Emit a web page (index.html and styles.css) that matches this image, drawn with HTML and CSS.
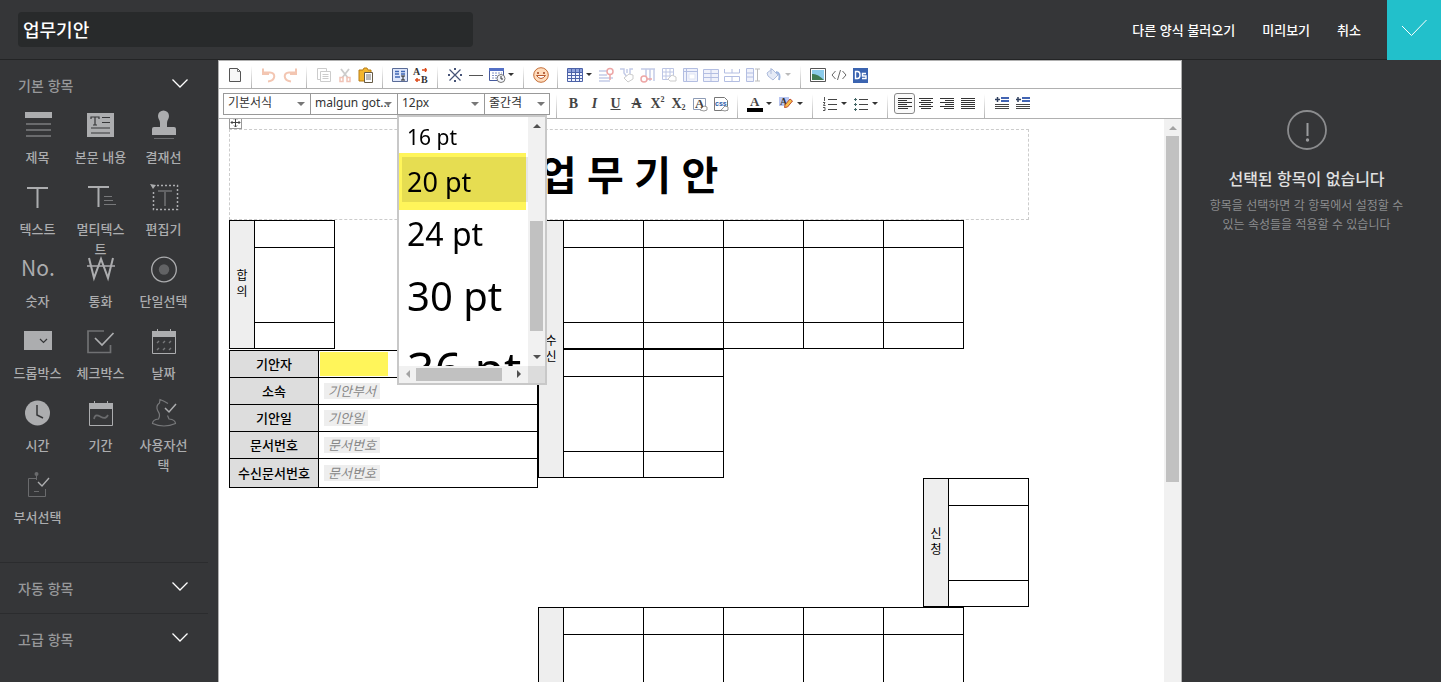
FILE: index.html
```html
<!DOCTYPE html>
<html lang="ko">
<head>
<meta charset="utf-8">
<title>업무기안</title>
<link rel="stylesheet" href="styles.css">
</head>
<body>
<header class="topbar">
  <input class="form-name" type="text" value="업무기안" aria-label="양식 이름">
  <nav class="top-actions">
    <button type="button">다른 양식 불러오기</button>
    <button type="button">미리보기</button>
    <button type="button">취소</button>
  </nav>
  <button type="button" class="confirm" aria-label="저장">
    <svg width="26" height="18" viewBox="0 0 26 18"><path d="M1 7l9.500 9.500L25.500 1" fill="none" stroke="#fff" stroke-width="1"/></svg>
  </button>
</header>

<div class="workspace">
  <aside class="palette">
    <section class="section open">
      <button type="button" class="section-head"><span>기본 항목</span><svg width="16" height="9" viewBox="0 0 16 9"><path d="M.5 .5L8 8 15.500 .5"/></svg></button>
      <div class="items">
        <button type="button" class="item"><svg viewBox="0 0 30 30"><path d="M2 2h27v6H2z" fill="#acadaf"/><path d="M3 14h25M3 20h25M3 26h25" stroke="#6a6b6d" stroke-width="2"/></svg><span>제목</span></button>
        <button type="button" class="item"><svg viewBox="0 0 30 30"><path d="M1 3h27v24H1z" fill="#acadaf"/><path d="M5 9V7h8v2M9 7v8M7 15h4M16 7.500h8M16 12.500h8M5 18h19M5 23h19" fill="none" stroke="#353638" stroke-width="1.200"/></svg><span>본문 내용</span></button>
        <button type="button" class="item"><svg viewBox="0 0 30 30"><path d="M9 6a5.500 5.500 0 0 1 11 0c0 3-2 4-2 7v4h7q2 0 2 2v6H3v-6q0-2 2-2h6v-4c0-3-2-4-2-7z" fill="#acadaf"/><path d="M5 28.500h20" stroke="#6a6b6d"/></svg><span>결재선</span></button>
        <button type="button" class="item"><svg viewBox="0 0 30 30"><path d="M4 6h21M14.500 6v20" stroke="#acadaf" stroke-width="2"/></svg><span>텍스트</span></button>
        <button type="button" class="item"><svg viewBox="0 0 30 30"><path d="M2 5h21M12.500 5v20" stroke="#acadaf" stroke-width="2"/><path d="M18 14.500h8M18 18.500h9M18 22.500h12" stroke="#77787a"/></svg><span>멀티텍스트</span></button>
        <button type="button" class="item"><svg viewBox="0 0 30 30"><path d="M8 3.500h20.500v24H4.500V8" fill="none" stroke="#acadaf" stroke-width="1.500" stroke-dasharray="2 2"/><path d="M1 2l6 1-3 4z" fill="#acadaf"/><path d="M9 9h14M16 9v15" stroke="#626365" stroke-width="2"/></svg><span>편집기</span></button>
        <button type="button" class="item"><svg viewBox="0 0 30 30"><text x="-2" y="22" class="num">No.</text></svg><span>숫자</span></button>
        <button type="button" class="item"><svg viewBox="0 0 30 30"><path d="M3 4l5 20 7-19 7 19 5-20" fill="none" stroke="#acadaf" stroke-width="2"/><path d="M1 12h28" stroke="#acadaf" stroke-width="1.500"/></svg><span>통화</span></button>
        <button type="button" class="item"><svg viewBox="0 0 30 30"><circle cx="15" cy="15.500" r="12.300" fill="none" stroke="#acadaf" stroke-width="1.300"/><circle cx="15" cy="15.500" r="5.200" fill="#626365"/></svg><span>단일선택</span></button>
        <button type="button" class="item"><svg viewBox="0 0 30 30"><path d="M1 5h28v19H1z" fill="#acadaf"/><path d="M17 13l3.500 3.500L24 13" fill="none" stroke="#353638" stroke-width="1.200"/></svg><span>드롭박스</span></button>
        <button type="button" class="item"><svg viewBox="0 0 30 30"><path d="M18 5H2v21.500h22.500V19" fill="none" stroke="#707173" stroke-width="1.700"/><path d="M9 12l7 7L27.500 7" fill="none" stroke="#acadaf" stroke-width="1.700"/></svg><span>체크박스</span></button>
        <button type="button" class="item"><svg viewBox="0 0 30 30"><path d="M3.500 5.500h23v22h-23z" fill="none" stroke="#acadaf"/><path d="M3 5h24v6H3zM8 3h1v4H8zM21 3h1v4h-1z" fill="#acadaf"/><path d="M8 17l2-2M14 17l2-2M20 17l2-2M8 24l2-2M14 24l2-2M20 24l2-2" stroke="#77787a" stroke-width="1.400"/></svg><span>날짜</span></button>
        <button type="button" class="item"><svg viewBox="0 0 30 30"><circle cx="14.500" cy="15" r="12.500" fill="#acadaf"/><path d="M14 7v10l6 3" fill="none" stroke="#353638" stroke-width="1.500"/></svg><span>시간</span></button>
        <button type="button" class="item"><svg viewBox="0 0 30 30"><path d="M3.500 5.500h23v22h-23z" fill="none" stroke="#acadaf"/><path d="M3 5h24v6H3zM8 3h1v4H8zM21 3h1v4h-1z" fill="#acadaf"/><path d="M8 21c1-6 5-3 7-2s5 2 7-2" fill="none" stroke="#6a6b6d" stroke-width="1.700"/></svg><span>기간</span></button>
        <button type="button" class="item"><svg viewBox="0 0 30 30"><path d="M19 5.500q-4-2.500-8-4l-.5 3.500q-3 2-2.500 5.500c.5 3 2.500 4 2.500 6.500s-.5 3-1 4c-4 .5-6 2.500-6 4.500q11.500 5 23 0c0-2.500-2-4-6.500-4.500l-1.500-3.500" fill="none" stroke="#77787a" stroke-width="1.200"/><path d="M16 10l4 4 7-8" fill="none" stroke="#acadaf" stroke-width="1.500"/></svg><span>사용자선택</span></button>
        <button type="button" class="item"><svg viewBox="0 0 30 30"><path d="M13 8.500H5.500v18h17V19" fill="none" stroke="#6a6b6d"/><circle cx="13.500" cy="4" r="2" fill="#6a6b6d"/><path d="M13.500 5v5M11 21.500h5" stroke="#6a6b6d"/><path d="M15 12l4 4 7-8" fill="none" stroke="#acadaf" stroke-width="1.400"/></svg><span>부서선택</span></button>
      </div>
    </section>
    <section class="section">
      <button type="button" class="section-head"><span>자동 항목</span><svg width="16" height="9" viewBox="0 0 16 9"><path d="M.5 .5L8 8 15.500 .5"/></svg></button>
    </section>
    <section class="section last">
      <button type="button" class="section-head"><span>고급 항목</span><svg width="16" height="9" viewBox="0 0 16 9"><path d="M.5 .5L8 8 15.500 .5"/></svg></button>
    </section>
  </aside>

  <main class="editor">
    <div class="tools tools-top">
      <div class="group"><button type="button" class="tool" aria-label="새 문서"><svg viewBox="0 0 16 16"><path d="M2.500 1.500h8l3 3v10h-11z" fill="#f7f7f7" stroke="#555"/><path d="M10.500 1.500v3h3" fill="none" stroke="#777"/></svg></button></div>
      <div class="group">
        <button type="button" class="tool" aria-label="실행 취소" disabled><svg viewBox="0 0 16 16"><path d="M7 14.500c8-1 8-9 2-9H3M2 1.500V7h6" fill="none" stroke="#f3c6b2" stroke-width="2"/></svg></button>
        <button type="button" class="tool" aria-label="다시 실행" disabled><svg viewBox="0 0 16 16"><path d="M9 14.500c-8-1-8-9-2-9h6M14 1.500V7H8" fill="none" stroke="#f3c6b2" stroke-width="2"/></svg></button>
      </div>
      <div class="group">
        <button type="button" class="tool" aria-label="복사" disabled><svg viewBox="0 0 16 16"><path d="M1.500 1.500h9v11h-9z" fill="#fff" stroke="#ccc"/><path d="M4.500 4.500h10v10h-10zM6.500 7.500h6M6.500 9.500h6M6.500 11.500h6" fill="#fff" stroke="#ccc"/></svg></button>
        <button type="button" class="tool" aria-label="잘라내기" disabled><svg viewBox="0 0 16 16"><path d="M4 2l7 9M12 2L5 11" stroke="#ccc" stroke-width="1.800"/><path d="M3 10.500h3v4H3zM10 10.500h3v4h-3z" fill="none" stroke="#f1c3b6" stroke-width="1.500"/></svg></button>
        <button type="button" class="tool" aria-label="붙여넣기"><svg viewBox="0 0 16 16"><path d="M1 3h4l1-2h3l1 2h3v11H1z" fill="#f4b62c" stroke="#b77d17"/><path d="M6.500 5.500h8v10h-8z" fill="#fff" stroke="#665b45"/><path d="M8 8h5M8 10h5M8 12h5" stroke="#777"/></svg></button>
      </div>
      <div class="group">
        <button type="button" class="tool" aria-label="서식"><svg viewBox="0 0 16 16"><path d="M.5 1.500h15v13H.5z" fill="#dfe7fb" stroke="#5a6c98"/><path d="M3 4.500h4M3 7h4M3 10h5M9 4.500h4M9 7h4" stroke="#4067b5" stroke-width="1.300"/><path d="M9 9h4M11 9v4M9 13h4" stroke="#222"/></svg></button>
        <button type="button" class="tool" aria-label="찾아 바꾸기"><svg viewBox="0 0 16 16"><text x="0" y="8" class="glyph-small">A</text><text x="8" y="16" class="glyph-small">B</text><path d="M9 3h5M12.500 1v4M2 13h5M4 11v4" stroke="#dd4b1b" stroke-width="1.500"/></svg></button>
      </div>
      <div class="group">
        <button type="button" class="tool" aria-label="특수 문자"><svg viewBox="0 0 16 16"><path d="M2.500 2.500l11 11M13.500 2.500l-11 11" stroke="#465377" stroke-width="1.200"/><path d="M7 1h2v2H7zM7 13h2v2H7zM1 7h2v2H1zM13 7h2v2h-2z" fill="#465377"/></svg></button>
        <button type="button" class="tool" aria-label="가로줄"><svg viewBox="0 0 16 16"><path d="M1 8.500h14" stroke="#555"/></svg></button>
        <button type="button" class="tool wide" aria-label="날짜 삽입"><svg viewBox="0 0 16 16"><path d="M.5 1.500h14v12H.5z" fill="#fff" stroke="#465a9d"/><path d="M0 1h15v3H0z" fill="#5470c6"/><path d="M3 6h10M3 8.500h10M3 11h6" stroke="#8493c4" stroke-dasharray="2 1"/><circle cx="12" cy="11.500" r="4" fill="#f3f5fa" stroke="#777"/><path d="M12 9v3h2" fill="none" stroke="#333"/></svg><i></i></button>
      </div>
      <div class="group"><button type="button" class="tool" aria-label="이모티콘"><svg viewBox="0 0 16 16"><circle cx="8" cy="8" r="7.300" fill="#ffdcbc" stroke="#c56f39"/><path d="M3.500 8.500q4.500 6 9 0z" fill="#fff" stroke="#b7592d"/><path d="M5 5v2M11 5v2" stroke="#a3441f" stroke-width="1.500"/></svg></button></div>
      <div class="group">
        <button type="button" class="tool wide" aria-label="표 삽입"><svg viewBox="0 0 16 16"><path d="M1 2h14v12H1z" fill="#f1f4ff"/><path d="M1 2h14v3H1z" fill="#8fa2dc"/><path d="M.5 1.500h15v13H.5zM1 5.500h14M1 8.500h14M1 11.500h14M4.500 2v12M8.500 2v12M12.500 2v12" fill="none" stroke="#4c62a8"/></svg><i></i></button>
        <button type="button" class="tool" aria-label="행 삭제" disabled><svg viewBox="0 0 16 16"><path d="M1 4h8M1 8h8M1 11h14M1 14h11" stroke="#c3cbe8" stroke-width="1.500"/><circle cx="12" cy="4.500" r="3" fill="none" stroke="#eda6a6" stroke-width="1.500"/><path d="M12 8v5" stroke="#eda6a6" stroke-width="1.500"/></svg></button>
        <button type="button" class="tool" aria-label="열 지우기" disabled><svg viewBox="0 0 16 16"><path d="M1 2h4v4l3 4M14 2h-3v5M8 2v4" fill="none" stroke="#c3cbe8" stroke-width="1.500"/><path d="M5 11l5-4 4 1v4l-5 3z" fill="#fff" stroke="#ccc"/></svg></button>
        <button type="button" class="tool" aria-label="열 삭제" disabled><svg viewBox="0 0 16 16"><path d="M1 2h14M6 2v7M10 2v12M14 2v12" stroke="#c3cbe8" stroke-width="1.500"/><circle cx="4" cy="12" r="3" fill="none" stroke="#eda6a6" stroke-width="1.500"/><path d="M7 12h5" stroke="#eda6a6" stroke-width="1.500"/></svg></button>
        <button type="button" class="tool" aria-label="표 지우기" disabled><svg viewBox="0 0 16 16"><path d="M1.500 1.500h11v11h-11zM1 5h12M1 9h12M5 1v12M9 1v12" fill="none" stroke="#bdc6e5"/><path d="M7 12l4-4 4 2v4H9z" fill="#fff" stroke="#ccc"/></svg></button>
        <button type="button" class="tool" aria-label="표 속성" disabled><svg viewBox="0 0 16 16"><path d="M1.500 1.500h14v13h-14zM1 4.500h14M4.500 1v13" fill="#f0f2fb" stroke="#b3bee2"/><path d="M7 7h6v5H7z" fill="#fff" stroke="#e0e5f5"/></svg></button>
        <button type="button" class="tool" aria-label="셀 병합" disabled><svg viewBox="0 0 16 16"><path d="M.5 2.500h15v12H.5zM1 6.500h14M1 10.500h14M8 2v12" fill="#f0f2fb" stroke="#b3bee2"/></svg></button>
        <button type="button" class="tool" aria-label="셀 나누기" disabled><svg viewBox="0 0 16 16"><path d="M.5 9.500h15v5H.5zM8 9v5M.5 2v4h15V2M8 2v4" fill="none" stroke="#b3bee2"/></svg></button>
        <button type="button" class="tool" aria-label="셀 높이" disabled><svg viewBox="0 0 16 16"><path d="M1.500 1.500h7v13h-7zM1 6h8M1 10h8" fill="#f0f2fb" stroke="#b3bee2"/><path d="M10 2h5M12.500 2v12M10 14h5" stroke="#bbb"/></svg></button>
        <button type="button" class="tool wide" aria-label="셀 배경" disabled><svg viewBox="0 0 16 16"><path d="M1 6l5-4 6 6-5 5-5-4zM5 1v6" fill="#e6ebf6" stroke="#aebcdc"/><path d="M10 5q5 1 3 8" fill="none" stroke="#9eb6df" stroke-width="2"/></svg><i></i></button>
      </div>
      <div class="group end">
        <button type="button" class="tool" aria-label="이미지"><svg viewBox="0 0 16 16"><path d="M.5 1.500h15v13H.5z" fill="#fff" stroke="#555"/><path d="M2 3h12v10H2z" fill="#8bcbea"/><path d="M2 7q5-1 12 6H2z" fill="#3f7b54"/></svg></button>
        <button type="button" class="tool" aria-label="HTML"><svg viewBox="0 0 16 16"><path d="M4.500 4L1 8l3.500 4M11.500 4L15 8l-3.500 4M9.500 3l-3 10" fill="none" stroke="#666"/></svg></button>
        <button type="button" class="tool" aria-label="DS"><svg viewBox="0 0 16 16"><path d="M1 1h15v15H1z" fill="#3b64b0"/><path d="M3.500 4.500h2q2.500 0 2.500 3.500t-2.500 3.500h-2zM14 6.500h-3.500V9H14v2.500h-4" fill="none" stroke="#fff" stroke-width="1.400"/></svg></button>
      </div>
    </div>

    <div class="tools tools-bottom">
      <div class="group selects">
        <label class="pick"><select aria-label="서식"><option>기본서식</option></select></label>
        <label class="pick"><select aria-label="글꼴"><option>malgun got...</option></select></label>
        <div class="pick-anchor">
          <label class="pick"><select aria-label="글자 크기"><option>12px</option></select></label>
          <div class="size-menu" role="listbox" aria-label="글자 크기 목록">
            <div class="size-list">
              <div class="size s16" role="option">16 pt</div>
              <div class="size s20" role="option" aria-selected="true"><span>20 pt</span></div>
              <div class="size s24" role="option">24 pt</div>
              <div class="size s30" role="option">30 pt</div>
              <div class="size s36" role="option">36 pt</div>
            </div>
            <div class="bar-v"><i class="up"></i><b></b><i class="down"></i></div>
            <div class="bar-h"><i class="left"></i><b></b><i class="right"></i></div>
            <div class="corner"></div>
          </div>
        </div>
        <label class="pick narrow"><select aria-label="줄간격"><option>줄간격</option></select></label>
      </div>
      <div class="group">
        <button type="button" class="tool serif">B</button>
        <button type="button" class="tool serif"><em>I</em></button>
        <button type="button" class="tool serif"><u>U</u></button>
        <button type="button" class="tool serif"><s>A</s></button>
        <button type="button" class="tool serif">X<sup>2</sup></button>
        <button type="button" class="tool serif">X<sub>2</sub></button>
        <button type="button" class="tool" aria-label="서식 지우기"><svg viewBox="0 0 16 16"><path d="M1.500 2.500h12v11h-12z" fill="#fff" stroke="#8d9bb5"/><text x="3" y="12" class="glyph">A</text><path d="M8 14l4-4 3 1v3l-3 1z" fill="#fff" stroke="#999"/></svg></button>
        <button type="button" class="tool" aria-label="CSS 지우기"><svg viewBox="0 0 16 16"><path d="M1.500 1.500h10l3 3v10h-13z" fill="#fff" stroke="#777"/><text x="2" y="10" class="css-text">css</text><path d="M8 14l4-4 3 1v3l-3 1z" fill="#fff" stroke="#999"/></svg></button>
      </div>
      <div class="group">
        <button type="button" class="tool wide" aria-label="글자 색"><svg viewBox="0 0 16 16"><text x="3" y="10" class="glyph">A</text><path d="M0 12h16v4H0z"/></svg><i></i></button>
        <button type="button" class="tool wide" aria-label="형광펜"><svg viewBox="0 0 16 16"><path d="M1 1h10v9H1z" fill="#b9c6f2"/><text x="2" y="9" class="glyph-small">A</text><path d="M7 9l5-6 2.500 2-5 6-3 .5z" fill="#f7bf4b" stroke="#c04c2c"/></svg><i></i></button>
      </div>
      <div class="group">
        <button type="button" class="tool wide" aria-label="번호 목록"><svg viewBox="0 0 16 16"><path d="M6 3.500h9M6 8.500h9M6 13.500h9" stroke="#444"/><path d="M2.500 1v4M1 6.500h2L1.500 9.500h2M1 11.500h2v3H1" fill="none" stroke="#555"/></svg><i></i></button>
        <button type="button" class="tool wide" aria-label="글머리 목록"><svg viewBox="0 0 16 16"><path d="M6 3.500h9M6 8.500h9M6 13.500h9" stroke="#444"/><path d="M1 3.500h3M2.500 2v3M1 8.500h3M2.500 7v3M1 13.500h3M2.500 12v3" stroke="#466"/></svg><i></i></button>
      </div>
      <div class="group">
        <button type="button" class="tool pressed" aria-label="왼쪽 맞춤"><svg viewBox="0 0 16 16"><path d="M1 2.500h14M1 4.500h9M1 6.500h14M1 8.500h9M1 10.500h14M1 12.500h10" stroke="#333"/></svg></button>
        <button type="button" class="tool" aria-label="가운데 맞춤"><svg viewBox="0 0 16 16"><path d="M1 2.500h14M3 4.500h10M1 6.500h14M3 8.500h10M1 10.500h14M3 12.500h10" stroke="#333"/></svg></button>
        <button type="button" class="tool" aria-label="오른쪽 맞춤"><svg viewBox="0 0 16 16"><path d="M1 2.500h14M6 4.500h9M1 6.500h14M6 8.500h9M1 10.500h14M5 12.500h10" stroke="#333"/></svg></button>
        <button type="button" class="tool" aria-label="양쪽 맞춤"><svg viewBox="0 0 16 16"><path d="M1 2.500h14M1 4.500h14M1 6.500h14M1 8.500h14M1 10.500h14M1 12.500h14" stroke="#333"/></svg></button>
      </div>
      <div class="group end">
        <button type="button" class="tool" aria-label="들여쓰기"><svg viewBox="0 0 16 16"><path d="M7 2h8M7 5h8" stroke="#4264b2" stroke-width="2"/><path d="M1 3.500h5M3.500 1v5" stroke="#30405f" stroke-width="1.500"/><path d="M1 8.500h14M1 10.500h14M1 12.500h14" stroke="#444"/></svg></button>
        <button type="button" class="tool" aria-label="내어쓰기"><svg viewBox="0 0 16 16"><path d="M7 2h8M7 5h8" stroke="#4264b2" stroke-width="2"/><path d="M1 3.500h5M3 1v5" stroke="#30405f" stroke-width="1.500"/><path d="M1 8.500h14M1 10.500h14M1 12.500h14" stroke="#444"/></svg></button>
      </div>
    </div>

    <div class="canvas">
      <div class="page">
        <div class="doc">
          <button type="button" class="move" aria-label="이동"><svg width="11" height="11" viewBox="0 0 11 11"><path d="M5.500 1v9M1 5.500h9M4 2.500l1.500-1.500L7 2.500M4 8.500l1.500 1.500L7 8.500M2.500 4L1 5.500 2.500 7M8.500 4L10 5.500 8.500 7" fill="none" stroke="#444"/></svg></button>
          <h1 class="doc-title">업 무 기 안</h1>
          <div class="doc-body">
            <div class="doc-left">
              <table class="grid">
                <tr class="r1"><th rowspan="3" scope="rowgroup">합<br>의</th><td></td></tr>
                <tr class="r2"><td></td></tr>
                <tr class="r3"><td></td></tr>
              </table>
              <table class="info">
                <tr><th scope="row">기안자</th><td class="marked"><span class="mark"></span></td></tr>
                <tr><th scope="row">소속</th><td><span class="chip">기안부서</span></td></tr>
                <tr><th scope="row">기안일</th><td><span class="chip">기안일</span></td></tr>
                <tr><th scope="row">문서번호</th><td><span class="chip">문서번호</span></td></tr>
                <tr class="tall"><th scope="row">수신문서번호</th><td><span class="chip">문서번호</span></td></tr>
              </table>
            </div>
            <div class="doc-right">
              <table class="grid">
                <tr class="r1"><th rowspan="6" scope="rowgroup">수<br>신</th><td></td><td></td><td></td><td></td><td></td></tr>
                <tr class="r2"><td></td><td></td><td></td><td></td><td></td></tr>
                <tr class="r3"><td></td><td></td><td></td><td></td><td></td></tr>
                <tr class="r4"><td></td><td></td></tr>
                <tr class="r2"><td></td><td></td></tr>
                <tr class="r3"><td></td><td></td></tr>
              </table>
              <table class="grid push-right">
                <tr class="r1"><th rowspan="3" scope="rowgroup">신<br>청</th><td></td></tr>
                <tr class="r2"><td></td></tr>
                <tr class="r3"><td></td></tr>
              </table>
              <table class="grid">
                <tr class="r1"><th rowspan="3" scope="rowgroup"></th><td></td><td></td><td></td><td></td><td></td></tr>
                <tr class="r2"><td></td><td></td><td></td><td></td><td></td></tr>
                <tr class="r3"><td></td><td></td><td></td><td></td><td></td></tr>
              </table>
            </div>
          </div>
        </div>
      </div>
      <div class="canvas-bar"><i class="up"></i><b></b></div>
    </div>
  </main>

  <aside class="props">
    <svg width="40" height="40" viewBox="0 0 40 40"><circle cx="20" cy="20" r="19" fill="none" stroke="#8b8c8e" stroke-width="1.800"/><path d="M20.500 13v13" stroke="#9b9c9e" stroke-width="2"/><circle cx="20.500" cy="30" r="1.700" fill="#9b9c9e"/></svg>
    <h2>선택된 항목이 없습니다</h2>
    <p>항목을 선택하면 각 항목에서 설정할 수<br>있는 속성들을 적용할 수 있습니다</p>
  </aside>
</div>
</body>
</html>
```

FILE: styles.css
```css
* { box-sizing: border-box; }

body {
  margin: 0;
  height: 100vh;
  display: flex;
  flex-direction: column;
  overflow: hidden;
  background: #353638;
  font-family: "Noto Sans", "Noto Sans CJK KR", sans-serif;
  font-size: 13px;
}

button {
  border: 0;
  padding: 0;
  background: none;
  font: inherit;
  color: inherit;
  cursor: pointer;
}

/* Header */
.topbar {
  flex: none;
  display: flex;
  align-items: center;
  height: 60px;
  padding-left: 18px;
  border-bottom: 1px solid #232425;
}
.form-name {
  width: 455px;
  height: 35px;
  padding: 0 5px 2px;
  border: 0;
  border-radius: 4px;
  background: #282a2b;
  color: #fff;
  font: 500 18px/24px "Noto Sans CJK KR", sans-serif;
}
.top-actions {
  display: flex;
  gap: 27px;
  margin-left: auto;
  margin-right: 26px;
  color: #fff;
  font: 500 13px/20px "Noto Sans CJK KR", sans-serif;
}
.confirm {
  align-self: flex-start;
  flex: none;
  width: 54px;
  height: 60px;
  background: #22c0cb;
}

.workspace {
  flex: 1;
  min-height: 0;
  display: grid;
  grid-template-columns: 218px minmax(0, 1fr) 259px;
}

/* Left palette */
.palette {
  padding-right: 10px;
  overflow: hidden;
  color: #acadaf;
  font-family: "Noto Sans CJK KR", sans-serif;
}
.section {
  border-bottom: 1px solid #2b2c2e;
  padding-bottom: 6px;
}
.section.open { padding-bottom: 26px; }
.section.last { border-bottom: 0; }
.section-head {
  width: 100%;
  display: flex;
  justify-content: space-between;
  height: 44px;
  padding: 15px 20px 9px 18px;
  color: #97989a;
  font-size: 14px;
  font-weight: 500;
  line-height: 20px;
}
.section-head svg {
  margin-top: 4px;
  fill: none;
  stroke: #fff;
  stroke-width: 1.3;
}
.items {
  display: grid;
  grid-template-columns: repeat(3, 63px);
  grid-auto-rows: 72px;
  padding-left: 6px;
}
.item {
  display: flex;
  flex-direction: column;
  align-items: center;
  justify-content: flex-start;
  gap: 7px;
  padding: 6px 4px 0;
  font-weight: 500;
  line-height: 20px;
  word-break: break-all;
}
.item svg { width: 30px; height: 30px; flex: none; overflow: visible; }
.num { font: 21px "Noto Sans CJK KR", sans-serif; fill: #acadaf; }

/* Editor */
.editor {
  display: flex;
  flex-direction: column;
  min-width: 0;
  min-height: 0;
  border: solid #b0b0b0;
  border-width: 1px 1px 0;
  background: #fff;
}
.tools {
  flex: none;
  display: flex;
  border-bottom: 1px solid #b0b0b0;
}
.tools-top { height: 28px; }
.tools-bottom { height: 30px; }
.group {
  display: flex;
  align-items: center;
  padding: 0 6px;
  border-right: 1px solid;
  border-image: linear-gradient(#fff 20%, #b0b0b0) 1;
}
.group:first-child { padding-left: 5px; }
.group.end { border: 0; }
.tool {
  width: 21px;
  height: 21px;
  display: flex;
  align-items: center;
  justify-content: center;
}
.tool svg { width: 16px; height: 16px; flex: none; overflow: visible; }
.tool.wide { width: 31px; gap: 3px; }
.tool i {
  border: solid transparent;
  border-width: 3px 3px 0;
  border-top-color: #333;
}
.tool:disabled i { border-top-color: #bbb; }
.tool.pressed { border: 1px solid #888; border-radius: 3px; background: #fafafa; }
.tool.serif {
  font: bold 14px/20px "Liberation Serif", serif;
  color: #444;
}
.tool sup, .tool sub { font-size: 8px; line-height: 10px; }
.tool sup { margin-bottom: 8px; vertical-align: baseline; }
.tool sub { margin-top: 8px; vertical-align: baseline; }
.glyph { font: bold 13px "Liberation Serif", serif; fill: #444; }
.glyph-small { font: bold 10px "Liberation Serif", serif; fill: #333; }
.css-text { font: bold 7px "Liberation Sans", sans-serif; fill: #2a5aa8; }

.group.selects:first-child { padding: 0 6px 0 4px; }
.pick {
  display: flex;
  position: relative;
  width: 87px;
  height: 22px;
}
.pick::after {
  content: "";
  position: absolute;
  right: 5px;
  top: 9px;
  border: solid transparent;
  border-width: 4px 4px 0;
  border-top-color: #777;
  pointer-events: none;
}
.pick select {
  width: 88px;
  flex: none;
  height: 22px;
  padding: 0 0 1px 4px;
  appearance: none;
  border: 1px solid #999;
  border-radius: 0;
  background: #fff;
  color: #333;
  font: 12px/18px "Noto Sans", "Noto Sans CJK KR", sans-serif;
}
.pick.narrow, .pick.narrow select { width: 66px; }
.pick-anchor { position: relative; }

/* Font size menu, floats over the document */
.size-menu {
  position: absolute;
  z-index: 5;
  left: 0;
  top: 22px;
  width: 150px;
  height: 270px;
  display: grid;
  grid-template-columns: minmax(0, 1fr) 17px;
  grid-template-rows: minmax(0, 1fr) 17px;
  border: 2px solid #c8c8c8;
  background: #fff;
}
.size-list { overflow: hidden; padding-left: 3px; color: #000; }
.size { padding-left: 5px; white-space: nowrap; }
.s16 { font-size: 21px; line-height: 40px; }
.s20 {
  position: relative;
  height: 45px;
  margin-bottom: 4px;
  background: #e6e6e6;
  font-size: 27px;
  line-height: 49px;
}
.s20::before {
  content: "";
  position: absolute;
  left: -3px;
  right: 2px;
  top: -4px;
  bottom: -8px;
  background: #fff55a;
  mix-blend-mode: multiply;
}
.s20 span { position: relative; }
.s24 { font-size: 32px; line-height: 56px; }
.s30 { font-size: 40px; line-height: 68px; }
.s36 { font-size: 48px; line-height: 78px; }

.bar-v, .bar-h { display: flex; align-items: center; background: #f1f1f1; }
.bar-v { flex-direction: column; padding: 7px 0; }
.bar-h { padding: 0 7px; }
.bar-v b { width: 13px; height: 110px; margin-top: auto; margin-bottom: 24px; background: #c1c1c1; }
.bar-h b { width: 86px; height: 13px; margin-left: 6px; margin-right: auto; background: #c1c1c1; }
.corner { background: #dcdcdc; }
.up, .down, .left, .right { border: 4px solid transparent; }
.up { border-top: 0; border-bottom-color: #505050; }
.down { border-bottom: 0; border-top-color: #505050; }
.left { border-left: 0; border-right-color: #a3a3a3; }
.right { border-right: 0; border-left-color: #505050; }

/* Document area */
.canvas { flex: 1; min-height: 0; display: flex; }
.page { flex: 1; min-width: 0; padding: 10px; overflow: hidden; }
.canvas-bar {
  flex: none;
  width: 17px;
  display: flex;
  flex-direction: column;
  align-items: center;
  padding-top: 7px;
  background: #f1f1f1;
}
.canvas-bar .up { border-bottom-color: #a3a3a3; }
.canvas-bar b { width: 13px; height: 346px; margin-top: 6px; background: #c1c1c1; }
.doc { position: relative; width: 800px; }
.move {
  position: absolute;
  left: 0;
  top: -13px;
  width: 13px;
  height: 13px;
  display: flex;
  border: 1px solid #999;
  background: #fff;
}
.doc-title {
  margin: 0;
  border: 1px dashed #ccc;
  color: #000;
  font-size: 40px;
  line-height: 89px;
  text-align: center;
}
.doc-body { display: flex; }
.doc-left { width: 309px; flex: none; }
.doc-right { flex: 1; display: flex; flex-direction: column; align-items: flex-start; }
.push-right { align-self: flex-end; }

table {
  border-collapse: separate;
  border-spacing: 0;
  border-top: 1px solid #000;
  border-left: 1px solid #000;
  color: #000;
  font-size: 13px;
  line-height: 16px;
}
th, td {
  padding: 0 0 1px;
  border: solid #000;
  border-width: 0 1px 1px 0;
}
.grid { font-size: 12px; }
.grid th { width: 25px; background: #eee; font-weight: 400; }
.grid td { width: 80px; }
.r1 { height: 27px; }
.r2 { height: 75px; }
.r3 { height: 26px; }
.r4 { height: 28px; }
.r4 td { border-top-width: 1px; }

.info { width: 309px; margin-top: 1px; table-layout: fixed; }
.info tr { height: 27px; }
.info .tall { height: 29px; }
.info th { width: 89px; background: #ddd; font-weight: 500; }
.info td { padding-left: 5px; }
.info .marked { padding: 1px; }
.mark { display: block; width: 68px; height: 24px; background: #fff55a; }
.chip {
  display: block;
  width: fit-content;
  padding: 0 4px;
  background: #eee;
  color: #888;
  font-style: italic;
  line-height: 16px;
}

/* Right panel */
.props {
  display: flex;
  flex-direction: column;
  align-items: center;
  padding: 50px 10px 0 0;
  text-align: center;
  font-family: "Noto Sans CJK KR", sans-serif;
}
.props h2 {
  margin: 16px 0 5px;
  color: #e0e0e0;
  font-size: 16px;
  font-weight: 500;
  line-height: 24px;
}
.props p {
  margin: 0;
  color: #8b8c8e;
  font-size: 12px;
  line-height: 19px;
}
```
